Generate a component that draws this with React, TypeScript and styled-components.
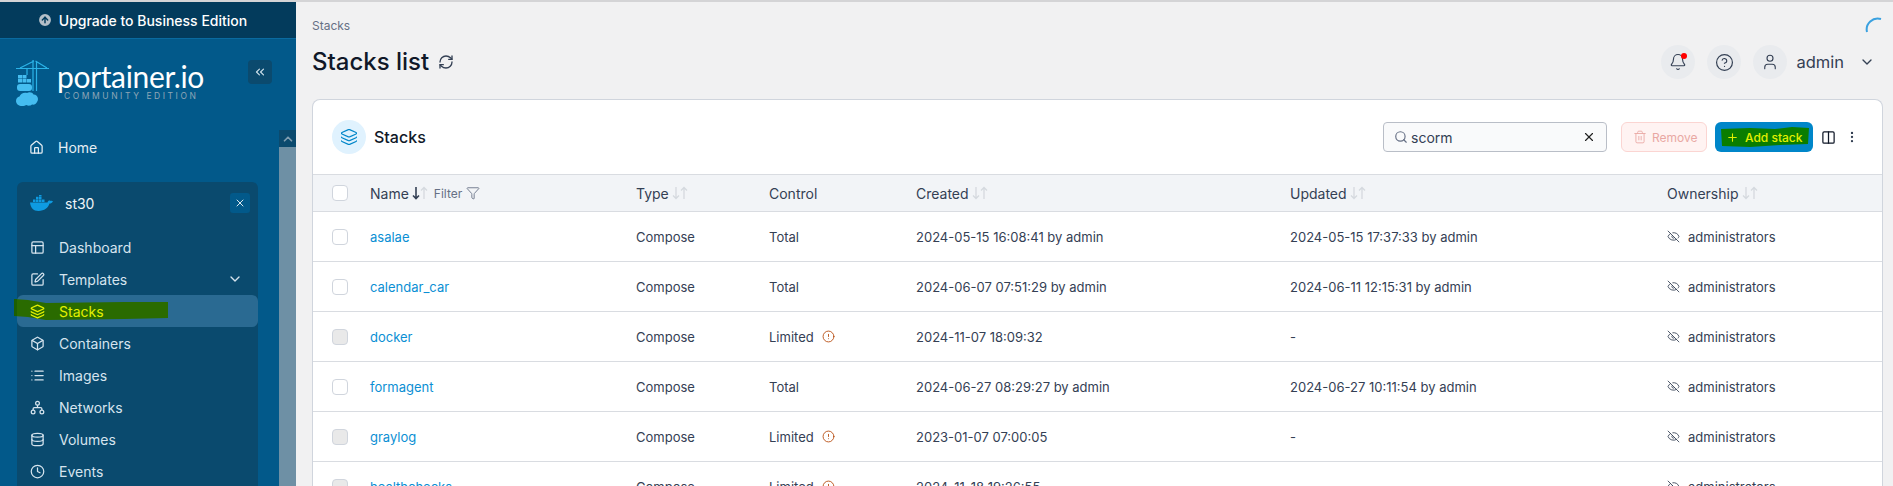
import { type FC, type ReactNode } from 'react';
import styled, { createGlobalStyle } from 'styled-components';
import {
  AlertCircle,
  ArrowUpCircle,
  Bell,
  Box,
  ChevronDown,
  ChevronUp,
  ChevronsLeft,
  Clock,
  Columns2,
  Database,
  EyeOff,
  Filter,
  HelpCircle,
  Home,
  Layers,
  List,
  MoreVertical,
  PanelsTopLeft,
  Plus,
  RefreshCw,
  Search,
  SquarePen,
  Trash2,
  User,
  X,
} from 'lucide-react';

const GlobalStyle = createGlobalStyle`
  html, body {
    margin: 0;
    height: 486px;
    overflow: hidden;
    background: #f1f1f2;
    font-family: Inter, "Liberation Sans", sans-serif;
  }
  * { box-sizing: border-box; }
`;

// ── Layout ──────────────────────────────────────────────────────────────────

const Page = styled.div`
  display: flex;
  width: 1893px;
  height: 486px;
  overflow: hidden;
  border-top: 2px solid #d4d4d6;
`;

const Sidebar = styled.aside`
  display: flex;
  flex-direction: column;
  flex: 0 0 296px;
  height: 484px;
  background: #02598a;
  overflow: hidden;
`;

const Upgrade = styled.div`
  display: flex;
  align-items: center;
  justify-content: center;
  gap: 6px;
  flex: 0 0 37px;
  padding-right: 12px;
  background: #033b5c;
  border-bottom: 1px solid #0a6aa0;
  color: #fff;
  font-size: 14px;
  font-weight: 500;

  svg {
    color: #033b5c;
    fill: #b4bfc8;
  }
`;

const LogoRow = styled.div`
  display: flex;
  justify-content: space-between;
  align-items: flex-start;
  flex: 0 0 91px;
  padding: 21px 24px 0 16px;
`;

const Brand = styled.div`
  display: flex;
  gap: 7px;
`;

const BrandText = styled.div`
  display: flex;
  flex-direction: column;
  padding-top: 2px;
`;

const BrandName = styled.span`
  font-family: Lato, sans-serif;
  font-size: 30px;
  line-height: 29px;
  color: #fff;
  letter-spacing: -0.35px;
`;

const BrandSub = styled.span`
  font-size: 8.5px;
  line-height: 10px;
  letter-spacing: 2.55px;
  color: #8fa6b7;
  padding-left: 7px;
  white-space: nowrap;
`;

const Collapse = styled.button`
  display: flex;
  align-items: center;
  justify-content: center;
  width: 24px;
  height: 24px;
  padding: 0;
  border: 0;
  border-radius: 4px;
  background: #0b4a6e;
  color: #cfe0ea;
`;

const SideBody = styled.div`
  display: flex;
  flex: 1;
  min-height: 0;
`;

const NavCol = styled.nav`
  display: flex;
  flex-direction: column;
  flex: 1;
  padding-left: 17px;
`;

const Scrollbar = styled.div`
  display: flex;
  flex-direction: column;
  flex: 0 0 17px;
  background: #6e90a5;
`;

const ScrollUp = styled.div`
  display: flex;
  align-items: center;
  justify-content: center;
  height: 17px;
  background: #0b4a6e;
  color: #7f9db0;
`;

const HomeItem = styled.div`
  display: flex;
  align-items: center;
  flex: 0 0 32px;
  gap: 14px;
  margin: 1px 0 19px;
  padding-left: 12px;
  width: 241px;
  color: #e6eef3;
  font-size: 14px;
`;

const EnvBox = styled.div`
  display: flex;
  flex-direction: column;
  flex-shrink: 0;
  width: 241px;
  background: #0a4a6e;
  border-radius: 6px 6px 0 0;
`;

const EnvHead = styled.div`
  display: flex;
  align-items: center;
  justify-content: space-between;
  flex: 0 0 42px;
  margin-bottom: 7px;
  padding: 0 8px 0 13px;
  color: #eef4f8;
  font-size: 14px;
`;

const EnvName = styled.div`
  display: flex;
  align-items: center;
  gap: 12px;
`;

const EnvClose = styled.div`
  display: flex;
  align-items: center;
  justify-content: center;
  width: 20px;
  height: 20px;
  border-radius: 3px;
  background: #02598a;
  color: #dbe7ee;
`;

const NavItem = styled.div<{ $active?: boolean }>`
  position: relative;
  display: flex;
  align-items: center;
  flex: 0 0 32px;
  gap: 14px;
  padding: 0 15px 0 13px;
  border-radius: 6px;
  font-size: 14px;
  color: ${(p) => (p.$active ? '#e2f000' : '#d6e4ee')};
  background: ${(p) => (p.$active ? '#2a6a92' : 'transparent')};
`;

const NavLabel = styled.span`
  position: relative;
  flex: 1;
`;

const Marker = styled.svg`
  position: absolute;
  left: -3px;
  top: 4px;
`;

const NavIcon = styled.span`
  position: relative;
  display: flex;
`;

// ── Main ────────────────────────────────────────────────────────────────────

const Main = styled.main`
  display: flex;
  flex-direction: column;
  flex: 1;
  min-width: 0;
  padding: 0 10px 0 16px;
`;

const Top = styled.header`
  display: flex;
  justify-content: space-between;
  flex: 0 0 97px;
`;

const TitleCol = styled.div`
  display: flex;
  flex-direction: column;
  padding-top: 16px;
`;

const Crumb = styled.div`
  font-size: 12px;
  line-height: 16px;
  color: #667085;
`;

const TitleRow = styled.div`
  display: flex;
  align-items: center;
  gap: 9px;
  margin-top: 13px;
`;

const Title = styled.h1`
  margin: 0;
  font-size: 24px;
  line-height: 30px;
  font-weight: 500;
  color: #101828;
`;

const TopRight = styled.div`
  display: flex;
  flex-direction: column;
  align-items: flex-end;
  padding: 15px 0 0;
`;

const Spinner = styled.svg`
  display: block;
`;

const UserBar = styled.div`
  display: flex;
  align-items: center;
  gap: 12px;
  margin-top: 10px;
  margin-right: 8px;
  color: #344054;
`;

const RoundBtn = styled.div`
  position: relative;
  display: flex;
  align-items: center;
  justify-content: center;
  width: 34px;
  height: 34px;
  border-radius: 50%;
  background: #e9ebee;
`;

const Dot = styled.span`
  position: absolute;
  top: 8px;
  right: 8px;
  width: 6px;
  height: 6px;
  border-radius: 50%;
  background: #f00;
`;

const UserName = styled.span`
  margin: 0 3px 0 -3px;
  font-size: 16.5px;
`;

const Card = styled.section`
  display: flex;
  flex-direction: column;
  flex-shrink: 0;
  background: #fff;
  border: 1px solid #d0d5dd;
  border-bottom: 0;
  border-radius: 8px 8px 0 0;
  overflow: hidden;
`;

const CardHead = styled.div`
  display: flex;
  align-items: center;
  justify-content: space-between;
  flex: 0 0 75px;
  padding: 0 23px 0 19px;
  border-bottom: 1px solid #d9dce1;
`;

const CardTitle = styled.div`
  display: flex;
  align-items: center;
  gap: 8px;
  font-size: 16px;
  font-weight: 500;
  color: #101828;
`;

const CardIcon = styled.div`
  display: flex;
  align-items: center;
  justify-content: center;
  width: 34px;
  height: 34px;
  border-radius: 50%;
  background: #e0f2fe;
  color: #0086c9;
`;

const Actions = styled.div`
  display: flex;
  align-items: center;
`;

const SearchBox = styled.div`
  display: flex;
  align-items: center;
  gap: 3px;
  width: 224px;
  height: 30px;
  margin-right: 14px;
  padding: 0 10px 0 10px;
  background: #f9fafb;
  border: 1px solid #b9bec7;
  border-radius: 4px;
  font-size: 14px;
  color: #344054;

  svg:first-child {
    color: #667085;
  }
`;

const SearchText = styled.span`
  flex: 1;
`;

const RemoveBtn = styled.div`
  display: flex;
  align-items: center;
  gap: 5px;
  width: 86px;
  height: 30px;
  padding-left: 11px;
  margin-right: 8px;
  border: 1px solid #fbd5d2;
  border-radius: 6px;
  background: #fff3f2;
  color: #e9a8a3;
  font-size: 12px;
`;

const AddBtn = styled.div`
  position: relative;
  display: flex;
  align-items: center;
  gap: 6px;
  width: 98px;
  height: 30px;
  padding-left: 11px;
  margin-right: 8px;
  border-radius: 6px;
  background: #0086c9;
  color: #e2f000;
  font-size: 12px;
  font-weight: 500;
`;

const AddMarker = styled.svg`
  position: absolute;
  left: 5px;
  top: 5px;
`;

const AddContent = styled.span`
  position: relative;
  display: flex;
`;

const MoreIcon = styled(MoreVertical)`
  margin-left: 9px;
`;

const TableRow = styled.div<{ $head?: boolean }>`
  display: grid;
  grid-template-columns: 57px 266px 133px 147px 374px 377px 1fr;
  align-items: center;
  flex: 0 0 ${(p) => (p.$head ? '37px' : '50px')};
  border-bottom: 1px solid #d9dce1;
  background: ${(p) => (p.$head ? '#f2f4f7' : '#fff')};
  font-size: 13px;
  color: #344054;
`;

const CheckCell = styled.div`
  display: flex;
  padding-left: 19px;
`;

const Check = styled.span<{ $disabled?: boolean }>`
  width: 16px;
  height: 16px;
  border-radius: 4px;
  border: 1px solid #d0d5dd;
  background: ${(p) => (p.$disabled ? '#e9e9e9' : '#fff')};
`;

const HeadCell = styled.div`
  display: flex;
  align-items: center;
  font-size: 14px;
  color: #344054;
`;

const SortIcons = styled.svg<{ $active?: boolean }>`
  margin-left: 3px;
  color: ${(p) => (p.$active ? '#344054' : '#d5d9df')};
`;

const FilterBtn = styled.span`
  display: flex;
  align-items: center;
  gap: 4px;
  margin-left: 6px;
  font-size: 12px;
  color: #667085;
`;

const Link = styled.a`
  color: #0b8fd4;
  font-size: 13px;
`;

const Cell = styled.div`
  display: flex;
  align-items: center;
  gap: 8px;
`;

// ── Data ────────────────────────────────────────────────────────────────────

type Stack = {
  name: string;
  control: 'Total' | 'Limited';
  created: string;
  updated: string;
};

const stacks: Stack[] = [
  { name: 'asalae', control: 'Total', created: '2024-05-15 16:08:41 by admin', updated: '2024-05-15 17:37:33 by admin' },
  { name: 'calendar_car', control: 'Total', created: '2024-06-07 07:51:29 by admin', updated: '2024-06-11 12:15:31 by admin' },
  { name: 'docker', control: 'Limited', created: '2024-11-07 18:09:32', updated: '-' },
  { name: 'formagent', control: 'Total', created: '2024-06-27 08:29:27 by admin', updated: '2024-06-27 10:11:54 by admin' },
  { name: 'graylog', control: 'Limited', created: '2023-01-07 07:00:05', updated: '-' },
  { name: 'healthchecks', control: 'Limited', created: '2024-11-18 19:26:55', updated: '-' },
];

// ── Drawings ────────────────────────────────────────────────────────────────

const NetworkIcon: FC = () => (
  <svg width="15" height="15" viewBox="0 0 24 24" fill="none" stroke="currentColor" strokeWidth="2">
    <circle cx="12" cy="5" r="3" />
    <circle cx="5" cy="19" r="3" />
    <circle cx="19" cy="19" r="3" />
    <path d="M12 8v4M5 16v-2a2 2 0 0 1 2-2h10a2 2 0 0 1 2 2v2" />
  </svg>
);

const navItems: { label: string; icon: ReactNode; active?: boolean; chevron?: boolean }[] = [
  { label: 'Dashboard', icon: <PanelsTopLeft size={15} /> },
  { label: 'Templates', icon: <SquarePen size={15} />, chevron: true },
  { label: 'Stacks', icon: <Layers size={15} />, active: true },
  { label: 'Containers', icon: <Box size={15} /> },
  { label: 'Images', icon: <List size={15} /> },
  { label: 'Networks', icon: <NetworkIcon /> },
  { label: 'Volumes', icon: <Database size={15} /> },
  { label: 'Events', icon: <Clock size={15} /> },
];

const PortainerMark: FC = () => (
  <svg width="34" height="46" viewBox="0 0 34 46">
    <g stroke="#2bb3e8" fill="none" strokeWidth="1.2">
      <path d="M0 8.500h33M17 0v31M20.500 1v30M18 1 4 8M19.500 1 31 8M11 9v6" />
    </g>
    <g fill="#45bdf0">
      <rect x="2" y="15" width="4" height="3.500" />
      <rect x="6.500" y="15" width="4" height="3.500" />
      <rect x="2" y="19" width="4" height="3.500" />
      <rect x="6.500" y="19" width="4" height="3.500" />
      <rect x="11" y="19" width="4" height="3.500" />
      <rect x="1" y="24" width="15" height="7" rx="3" />
      <path d="M6 46c-3 0-6-2-6-5 0-2.500 1.500-4 3.500-4.500C4.500 33.500 8 32 11 33c2-1.500 5.500-1 6.500 1.500 2.500 0 4.500 2 4.500 4.500 0 1-.3 2-1 3-.8 2-3 3-5 2.500-1.500 1.500-4 1.500-5.500.5-1 .5-2.500 1-4.500 1z" />
    </g>
  </svg>
);

const DockerIcon: FC = () => (
  <svg width="23" height="16" viewBox="0 0 23 16" fill="#0e9be2">
    <path d="M0 7.500h17.500c.5-1.800 2-2.300 3-1.600.8-.3 1.800-.2 2.500.4-.8 1.600-2 2.300-3.500 2.300C18.200 13 14.500 16 8.500 16 3.300 16 .6 12.500 0 7.500z" />
    <rect x="3" y="4.500" width="2.500" height="2.500" />
    <rect x="6" y="4.500" width="2.500" height="2.500" />
    <rect x="9" y="4.500" width="2.500" height="2.500" />
    <rect x="12" y="4.500" width="2.500" height="2.500" />
    <rect x="6" y="1.800" width="2.500" height="2.500" />
    <rect x="9" y="1.800" width="2.500" height="2.500" />
    <rect x="9" y="-1" width="2.500" height="2.500" />
  </svg>
);

const Sort: FC<{ active?: boolean }> = ({ active }) => (
  <SortIcons $active={active} width="16" height="14" viewBox="0 0 16 14" fill="none" stroke="currentColor" strokeWidth={active ? 1.6 : 1.3}>
    <path d="M4 1v11.500M1 9.500l3 3 3-3" />
    <path d="M12 13V1.500M9 4.500l3-3 3 3" stroke="#d5d9df" strokeWidth="1.3" />
  </SortIcons>
);

// ── Page ────────────────────────────────────────────────────────────────────

const App: FC = () => (
  <>
    <GlobalStyle />
    <Page>
      <Sidebar>
        <Upgrade>
          <ArrowUpCircle size={16} strokeWidth={2.2} />
          Upgrade to Business Edition
        </Upgrade>
        <LogoRow>
          <Brand>
            <PortainerMark />
            <BrandText>
              <BrandName>portainer.io</BrandName>
              <BrandSub>COMMUNITY EDITION</BrandSub>
            </BrandText>
          </Brand>
          <Collapse>
            <ChevronsLeft size={14} />
          </Collapse>
        </LogoRow>
        <SideBody>
          <NavCol>
            <HomeItem>
              <Home size={15} />
              Home
            </HomeItem>
            <EnvBox>
              <EnvHead>
                <EnvName>
                  <DockerIcon />
                  st30
                </EnvName>
                <EnvClose>
                  <X size={12} />
                </EnvClose>
              </EnvHead>
              {navItems.map((item) => (
                <NavItem key={item.label} $active={item.active}>
                  {item.active && (
                    <Marker width="156" height="22" viewBox="0 0 156 22">
                      <path d="M0 0 14 1 32 4 110 3 154 3 154 19 110 20 32 21 14 18 0 17Z" fill="#2a6b00" />
                      <path d="M0 0 3 0 3 17 0 17Z" fill="#1d5f00" />
                    </Marker>
                  )}
                  <NavIcon>{item.icon}</NavIcon>
                  <NavLabel>{item.label}</NavLabel>
                  {item.chevron && <ChevronDown size={16} />}
                </NavItem>
              ))}
            </EnvBox>
          </NavCol>
          <Scrollbar>
            <ScrollUp>
              <ChevronUp size={14} strokeWidth={3} />
            </ScrollUp>
          </Scrollbar>
        </SideBody>
      </Sidebar>

      <Main>
        <Top>
          <TitleCol>
            <Crumb>Stacks</Crumb>
            <TitleRow>
              <Title>Stacks list</Title>
              <RefreshCw size={16} color="#344054" />
            </TitleRow>
          </TitleCol>
          <TopRight>
            <Spinner width="18" height="18" viewBox="0 0 18 18">
              <path d="M2 15A11 11 0 0 1 16 2" fill="none" stroke="#3aa1e0" strokeWidth="2" />
            </Spinner>
            <UserBar>
              <RoundBtn>
                <Bell size={18} strokeWidth={1.5} />
                <Dot />
              </RoundBtn>
              <RoundBtn>
                <HelpCircle size={19} strokeWidth={1.5} />
              </RoundBtn>
              <RoundBtn>
                <User size={18} strokeWidth={1.5} />
              </RoundBtn>
              <UserName>admin</UserName>
              <ChevronDown size={16} />
            </UserBar>
          </TopRight>
        </Top>
        <Card>
          <CardHead>
            <CardTitle>
              <CardIcon>
                <Layers size={18} strokeWidth={1.5} />
              </CardIcon>
              Stacks
            </CardTitle>
            <Actions>
              <SearchBox>
                <Search size={14} />
                <SearchText>scorm</SearchText>
                <X size={14} color="#222" />
              </SearchBox>
              <RemoveBtn>
                <Trash2 size={14} strokeWidth={1.5} />
                Remove
              </RemoveBtn>
              <AddBtn>
                <AddMarker width="89" height="21" viewBox="0 0 89 21">
                  <path d="M1 2 30 1 55 2 72 0 89 1 88 17 60 18 30 20 2 19Z" fill="#0a7d00" />
                </AddMarker>
                <AddContent>
                  <Plus size={13} />
                </AddContent>
                <AddContent>Add stack</AddContent>
              </AddBtn>
              <Columns2 size={15} color="#101828" />
              <MoreIcon size={14} color="#344054" />
            </Actions>
          </CardHead>
          <TableRow $head>
            <CheckCell>
              <Check />
            </CheckCell>
            <HeadCell>
              Name
              <Sort active />
              <FilterBtn>
                Filter
                <Filter size={14} strokeWidth={1.5} />
              </FilterBtn>
            </HeadCell>
            <HeadCell>
              Type
              <Sort />
            </HeadCell>
            <HeadCell>Control</HeadCell>
            <HeadCell>
              Created
              <Sort />
            </HeadCell>
            <HeadCell>
              Updated
              <Sort />
            </HeadCell>
            <HeadCell>
              Ownership
              <Sort />
            </HeadCell>
          </TableRow>
          {stacks.map((stack) => (
            <TableRow key={stack.name}>
              <CheckCell>
                <Check $disabled={stack.control === 'Limited'} />
              </CheckCell>
              <Link>{stack.name}</Link>
              <Cell>Compose</Cell>
              <Cell>
                {stack.control}
                {stack.control === 'Limited' && <AlertCircle size={13} color="#b54708" strokeWidth={1.6} />}
              </Cell>
              <Cell>{stack.created}</Cell>
              <Cell>{stack.updated}</Cell>
              <Cell>
                <EyeOff size={13} strokeWidth={1.6} />
                administrators
              </Cell>
            </TableRow>
          ))}
        </Card>
      </Main>
    </Page>
  </>
);

export default App;
